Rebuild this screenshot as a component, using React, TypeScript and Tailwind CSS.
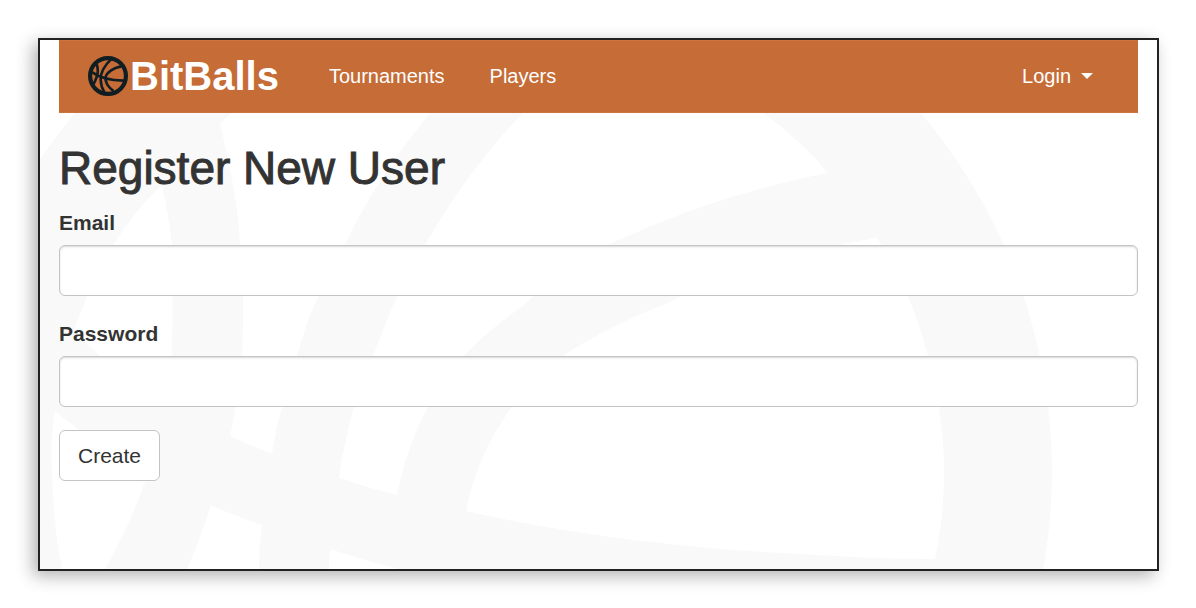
import type { InputHTMLAttributes } from 'react';

function BasketballLogo() {
  return (
    <svg
      viewBox="-56 -83 1108 1108"
      className="size-10 shrink-0"
      fill="none"
      stroke="#101d22"
      strokeWidth="72"
      aria-hidden="true"
    >
      <circle cx="498" cy="471" r="496" strokeWidth="116" />
      <path d="M50 365C300 540 640 600 940 598" />
      <path d="M175 100C225 250 260 400 95 700" />
      <path d="M600 -10C380 200 290 420 294 570C298 700 340 830 400 930" />
      <path d="M860 205C640 250 460 370 433 500C415 620 480 760 650 890" />
    </svg>
  );
}

function CourtBackdrop() {
  return (
    <svg
      viewBox="40 40 1117 529"
      preserveAspectRatio="xMinYMin slice"
      className="absolute inset-0 -z-10 size-full"
      aria-hidden="true"
    >
      <circle cx="498" cy="471" r="554" fill="#f9f9f9" />
      <g fill="#fff">
        <path d="M162 185C144 201 128 222 113 245C101 263 94 280 87 297C82 309 77 320 74 330C82 339 91 348 100 356C120 372 140 386 168 402C171 380 174 330 172 245C170 225 166 204 162 185Z" />
        <path d="M55 411C51 435 51 455 52 475C53 507 56 539 62 569H105C121 541 135 511 149 471C124 459 100 445 78 429C70 423 62 417 55 411Z" />
        <path d="M211 505C228 513 245 519 262 525C260 540 259 554 259 569H187C196 549 204 527 211 505Z" />
        <path d="M220 123L232 113H430C398 153 370 192 345 245C331 272 322 288 315 304C307 322 302 338 297 356C291 374 286 390 282 407C278 423 274 438 272 454C258 448 244 443 230 436C232 426 234 417 235 407C239 390 241 373 242 356C243 339 243 321 243 304C243 284 242 264 240 245C238 202 229 162 220 123Z" />
        <path d="M523 113H763C787 130 809 150 828 173C750 188 675 213 608 245C578 260 550 280 525 304C502 321 482 336 464 356C450 371 438 388 428 407C415 431 406 456 400 481L397 495C377 490 358 484 339 478C342 454 348 430 354 407C359 390 365 373 373 356C380 338 386 321 394 304C403 283 413 264 425 245C452 198 484 153 523 113Z" />
        <path d="M877 238C804 249 732 271 665 304C628 319 594 335 563 356C544 370 527 386 512 407C489 438 473 474 466 511C576 536 696 549 800 554C845 557 890 559 935 559C942 526 944 497 944 470C944 449 942 428 939 407C937 390 933 373 928 356C923 336 916 316 908 297C900 276 889 256 877 238Z" />
        <path d="M330 549C352 556 374 563 398 569H329Z" />
      </g>
    </svg>
  );
}

type FieldProps = InputHTMLAttributes<HTMLInputElement> & { id: string; label: string };

function Field({ id, label, ...rest }: FieldProps) {
  return (
    <div className="flex flex-col gap-[7px]">
      <label htmlFor={id} className="self-start text-[21px] leading-[30px] font-bold">
        {label}
      </label>
      <input
        id={id}
        name={id}
        className="h-[51px] w-full rounded-md border border-[#c4c4c4] bg-white px-4 text-[21px] shadow-[inset_0_1px_2px_rgba(0,0,0,0.16)] outline-none focus:border-[#66afe9]"
        {...rest}
      />
    </div>
  );
}

function Navbar() {
  return (
    <nav className="flex h-[73px] items-center border-y border-[#ce733d] bg-[#c66c36] pr-[45px] pb-[2px] pl-[29px] text-xl text-white">
      <a href="#" className="flex items-center gap-0.5 text-[40px] leading-none font-bold">
        <BasketballLogo />
        <span>BitBalls</span>
      </a>
      <div className="ml-[50px] flex gap-[45px]">
        <a href="#tournaments">Tournaments</a>
        <a href="#players">Players</a>
      </div>
      <button type="button" className="ml-auto flex items-center gap-[10px]" aria-haspopup="menu">
        Login
        <svg viewBox="0 0 12 6" className="h-[6px] w-3" fill="currentColor" aria-hidden="true">
          <path d="M0 0H12L6 6Z" />
        </svg>
      </button>
    </nav>
  );
}

export default function App() {
  return (
    <div className="bg-white py-[38px] pr-[37px] pl-[38px] font-['Liberation_Sans',Arial,sans-serif] text-[#333]">
      <div className="relative isolate border-2 border-[#222] bg-white px-[19px] pb-[88px] shadow-[-5px_5px_16px_rgba(0,0,0,0.3)]">
        <CourtBackdrop />
        <Navbar />
        <main>
          <h1 className="mt-[30px] mb-[15px] text-[46px] leading-[50px] font-medium [-webkit-text-stroke:1px_#333]">
            Register New User
          </h1>
          <form className="flex flex-col items-stretch gap-[23px]" onSubmit={(e) => e.preventDefault()}>
            <Field id="email" label="Email" type="email" autoComplete="email" />
            <Field id="password" label="Password" type="password" autoComplete="new-password" />
            <button
              type="submit"
              className="h-[51px] self-start rounded-md border border-[#c4c4c4] bg-white px-[18px] text-[21px]"
            >
              Create
            </button>
          </form>
        </main>
      </div>
    </div>
  );
}
